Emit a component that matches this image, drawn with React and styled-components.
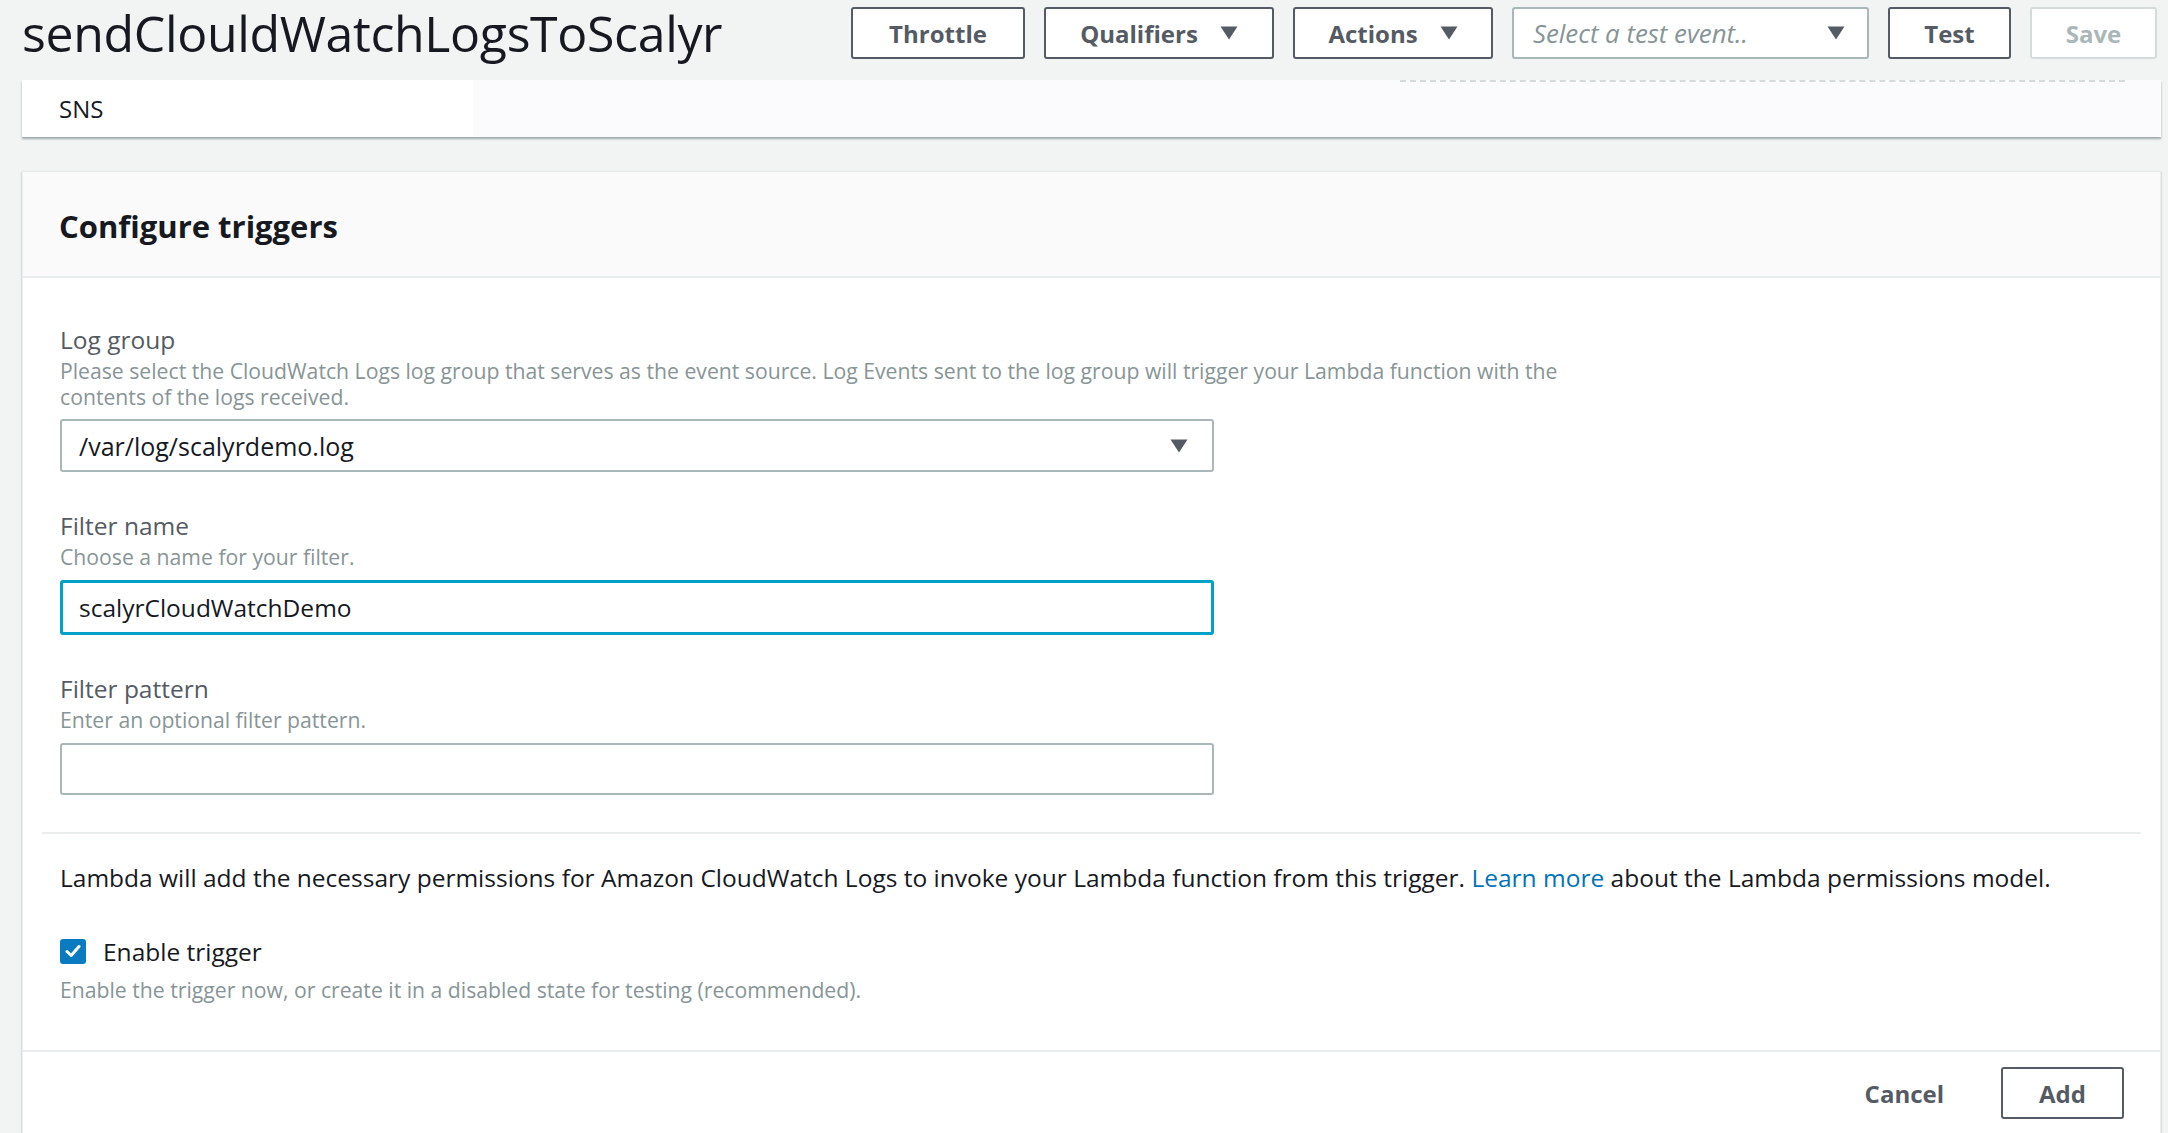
import styled, { createGlobalStyle } from 'styled-components';

const GlobalStyle = createGlobalStyle`
  html, body {
    margin: 0;
    padding: 0;
    background: #f2f3f3;
    font-family: "Open Sans", "Noto Sans", sans-serif;
    color: #16191f;
  }
  * { box-sizing: border-box; }
`;

const Caret = ({ color = '#545b64' }) => (
  <svg width="18" height="14" viewBox="0 0 18 14">
    <path d="M0.5 0.5 L17.5 0.5 L9 13.5 Z" fill={color} />
  </svg>
);

const App = () => {
  return (
    <Page>
      <GlobalStyle />
      <TopBar>
        <FunctionName>sendClouldWatchLogsToScalyr</FunctionName>
        <Toolbar>
          <Button w={174}>Throttle</Button>
          <Button w={230}>Qualifiers <Caret /></Button>
          <Button w={200}>Actions <Caret /></Button>
          <TestSelect>
            <span>Select a test event..</span>
            <Caret />
          </TestSelect>
          <Button w={123}>Test</Button>
          <Button w={127} disabled>Save</Button>
        </Toolbar>
      </TopBar>

      <TabStrip>
        <Tab>SNS</Tab>
        <TabRest>
          <Dashed />
        </TabRest>
      </TabStrip>

      <Card>
        <CardHeader>Configure triggers</CardHeader>
        <CardBody>
          <Fields>
            <Field>
              <Label>Log group</Label>
              <Help>
                Please select the CloudWatch Logs log group that serves as the event source. Log Events sent to the log group will trigger your Lambda function with the<br />
                contents of the logs received.
              </Help>
              <SelectBox>
                <span>/var/log/scalyrdemo.log</span>
                <Caret />
              </SelectBox>
            </Field>
            <Field>
              <Label>Filter name</Label>
              <Help>Choose a name for your filter.</Help>
              <TextInput focused defaultValue="scalyrCloudWatchDemo" />
            </Field>
            <Field>
              <Label>Filter pattern</Label>
              <Help>Enter an optional filter pattern.</Help>
              <TextInput defaultValue="" />
            </Field>
          </Fields>
          <Divider />
          <Permissions>
            <Notice>
              Lambda will add the necessary permissions for Amazon CloudWatch Logs to invoke your Lambda function from this trigger. <Link>Learn more</Link> about the Lambda permissions model.
            </Notice>
            <CheckRow>
              <CheckBox>
                <svg width="16" height="14" viewBox="0 0 16 14">
                  <path d="M2 7.5 L6.2 11.5 L14 2.5" stroke="#fff" strokeWidth="3" fill="none" strokeLinecap="round" strokeLinejoin="round" />
                </svg>
              </CheckBox>
              <CheckLabel>Enable trigger</CheckLabel>
            </CheckRow>
            <Help>Enable the trigger now, or create it in a disabled state for testing (recommended).</Help>
          </Permissions>
        </CardBody>
        <Footer>
          <CancelButton>Cancel</CancelButton>
          <Button w={123}>Add</Button>
        </Footer>
      </Card>
    </Page>
  );
};

export default App;

const Page = styled.div`
  padding: 0 7px 0 22px;
  min-height: 1133px;
`;

const TopBar = styled.div`
  display: flex;
  align-items: center;
  justify-content: space-between;
  height: 66px;
  padding-right: 4px;
  margin-bottom: 14px;
`;

const FunctionName = styled.h1`
  margin: 0;
  font-size: 50px;
  font-weight: 400;
  color: #16191f;
  letter-spacing: -0.35px;
  line-height: 66px;
`;

const Toolbar = styled.div`
  display: flex;
  align-items: center;
  gap: 19px;
`;

const Button = styled.button`
  display: flex;
  align-items: center;
  justify-content: center;
  gap: 22px;
  width: ${(p) => p.w}px;
  height: 52px;
  background: #fff;
  border: 2px solid ${(p) => (p.disabled ? '#d5dbdb' : '#545b64')};
  border-radius: 3px;
  font-family: inherit;
  font-size: 24px;
  font-weight: 700;
  color: ${(p) => (p.disabled ? '#aab7b8' : '#545b64')};
  padding: 0;
`;

const TestSelect = styled.div`
  display: flex;
  align-items: center;
  justify-content: space-between;
  width: 357px;
  height: 52px;
  padding: 0 22px 0 19px;
  background: #fff;
  border: 2px solid #aab7b8;
  border-radius: 3px;
  font-size: 25.8px;
  font-style: italic;
  color: #879596;
`;

const TabStrip = styled.div`
  display: flex;
  height: 57px;
  background: #fbfafc;
  box-shadow: 0 2px 2px rgba(0, 28, 36, 0.35);
  margin-bottom: 34px;
`;

const Tab = styled.div`
  width: 451px;
  display: flex;
  align-items: center;
  padding-left: 37px;
  background: #fff;
  font-size: 24px;
  color: #16191f;
`;

const TabRest = styled.div`
  flex: 1;
  display: flex;
  justify-content: flex-end;
  padding-right: 36px;
`;

const Dashed = styled.div`
  width: 725px;
  border-top: 2px dashed #d5dbdb;
`;

const Card = styled.div`
  background: #fff;
  border: 1px solid #eaeded;
  box-shadow: 0 1px 2px rgba(0, 28, 36, 0.3);
`;

const CardHeader = styled.div`
  height: 106px;
  display: flex;
  align-items: center;
  padding: 4px 0 0 36px;
  background: #fafafa;
  border-bottom: 2px solid #eaeded;
  font-size: 31px;
  font-weight: 700;
  color: #16191f;
`;

const CardBody = styled.div`
  padding: 47px 19px 0;
`;

const Fields = styled.div`
  display: flex;
  flex-direction: column;
  gap: 39px;
  padding: 0 18px;
`;

const Field = styled.div`
  display: flex;
  flex-direction: column;
`;

const Label = styled.div`
  font-size: 24.5px;
  line-height: 30px;
  color: #545b64;
  margin-bottom: 3px;
`;

const Help = styled.div`
  font-size: 21.2px;
  line-height: 26px;
  color: #879596;
`;

const SelectBox = styled.div`
  margin-top: 9px;
  width: 1154px;
  height: 53px;
  display: flex;
  align-items: center;
  justify-content: space-between;
  padding: 0 24px 0 17px;
  border: 2px solid #aab7b8;
  border-radius: 3px;
  font-size: 25px;
  color: #16191f;
`;

const TextInput = styled.input`
  margin-top: 10px;
  width: 1154px;
  height: ${(p) => (p.focused ? 55 : 52)}px;
  padding: 0 ${(p) => (p.focused ? 16 : 17)}px;
  border: ${(p) => (p.focused ? '3px solid #00a1c9' : '2px solid #aab7b8')};
  border-radius: 3px;
  font-family: inherit;
  font-size: 24.5px;
  color: #16191f;
  outline: none;
`;

const Divider = styled.div`
  height: 2px;
  background: #eaeded;
  margin-top: 37px;
`;

const Permissions = styled.div`
  padding: 29px 18px 47px;
`;

const Notice = styled.div`
  font-size: 24.5px;
  line-height: 30px;
  color: #16191f;
  margin-bottom: 43px;
`;

const Link = styled.a`
  color: #0073bb;
  cursor: pointer;
`;

const CheckRow = styled.div`
  display: flex;
  align-items: center;
  gap: 17px;
  height: 30px;
  margin-bottom: 11px;
`;

const CheckBox = styled.div`
  width: 26px;
  height: 25px;
  border-radius: 3px;
  background: #0a7bc1;
  display: flex;
  align-items: center;
  justify-content: center;
`;

const CheckLabel = styled.div`
  font-size: 24.5px;
  color: #16191f;
`;

const Footer = styled.div`
  display: flex;
  align-items: center;
  justify-content: flex-end;
  gap: 49px;
  border-top: 2px solid #eaeded;
  padding: 15px 36px 20px;
`;

const CancelButton = styled.button`
  background: none;
  border: none;
  padding: 0 8px;
  font-family: inherit;
  font-size: 24px;
  font-weight: 700;
  color: #545b64;
`;
